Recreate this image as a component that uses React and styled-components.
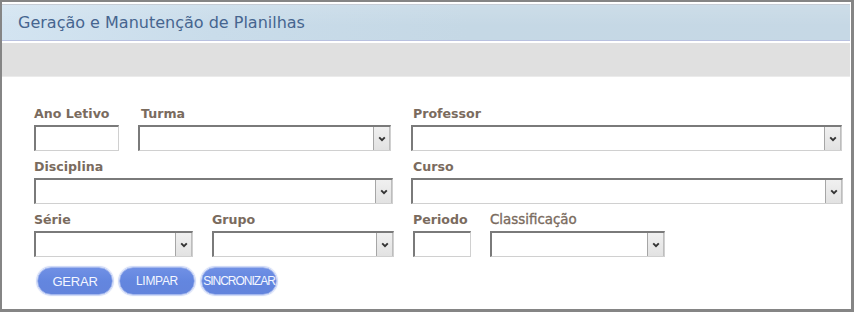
import React from "react";
import styled, { createGlobalStyle } from "styled-components";

const Global = createGlobalStyle`
  html, body { margin: 0; padding: 0; background: #ffffff; }
  body { font-family: "DejaVu Sans", Verdana, sans-serif; }
  * { box-sizing: border-box; }
`;

const Frame = styled.div`
  width: 854px;
  height: 312px;
  border-style: solid;
  border-color: #858585;
  border-width: 2px 3px 3px 2px;
  padding: 2px 1px 0 0;
  background: #ffffff;
  display: flex;
  flex-direction: column;
`;

const Header = styled.div`
  height: 37px;
  border-top: 1px solid #c6ccd4;
  border-bottom: 1px solid #b9c1e0;
  background:
    linear-gradient(180deg, rgba(255,255,255,0.12) 0%, rgba(255,255,255,0) 60%),
    linear-gradient(90deg, #d3e4f1 0%, #c9dcea 25%, #c5d8e5 55%, #c6d8e5 100%);
  display: flex;
  align-items: center;
  padding-left: 16px;
  font-family: "DejaVu Sans", Verdana, sans-serif;
  font-size: 16px;
  color: #46658f;
`;

const Toolbar = styled.div`
  margin-top: 2px;
  height: 34px;
  background: #e0e0e0;
  border-bottom: 1px solid #ebebeb;
`;

const Form = styled.div`
  padding: 29px 0 0 32px;
  display: flex;
  flex-direction: column;
  gap: 8px;
`;

const Row = styled.div`
  display: flex;
  align-items: flex-start;
`;

const Field = styled.div`
  width: ${(p) => p.$w}px;
  margin-left: ${(p) => p.$gap || 0}px;
  display: flex;
  flex-direction: column;
`;

const Label = styled.div`
  height: 16px;
  line-height: 16px;
  margin-bottom: 3px;
  padding-left: ${(p) => p.$shift || 0}px;
  font-family: "DejaVu Sans", Verdana, sans-serif;
  font-size: ${(p) => (p.$light ? "13.4px" : "12.6px")};
  font-weight: ${(p) => (p.$light ? 400 : 700)};
  -webkit-text-stroke: ${(p) => (p.$light ? "0.35px #7a6b5e" : "0")};
  color: #7a6b5e;
  white-space: nowrap;
  overflow: visible;
`;

const TextBox = styled.input`
  width: 100%;
  height: 26px;
  margin: 0;
  padding: 0 3px;
  border-style: solid;
  border-width: 2px 1px 1px 2px;
  border-color: #7a7a7a #d0d0d0 #d0d0d0 #7a7a7a;
  background: #ffffff;
  font-family: "DejaVu Sans", Verdana, sans-serif;
  font-size: 12px;
  outline: none;
`;

const SelectFrame = styled.div`
  width: 100%;
  height: 26px;
  display: flex;
  border-style: solid;
  border-width: 2px 1px 1px 2px;
  border-color: #7a7a7a #d0d0d0 #d0d0d0 #7a7a7a;
  background: #ffffff;
`;

const NativeSelect = styled.select`
  flex: 1;
  min-width: 0;
  appearance: none;
  -webkit-appearance: none;
  border: none;
  background: transparent;
  outline: none;
  font-family: "DejaVu Sans", Verdana, sans-serif;
  font-size: 12px;
  padding: 0 3px;
`;

const ArrowBox = styled.div`
  width: 17px;
  flex: none;
  background: linear-gradient(180deg, #f0f0f0 0%, #e2e2e2 100%);
  border-left: 1px solid #a6a6a6;
  border-right: 1px solid #bdbdbd;
  display: flex;
  align-items: center;
  justify-content: center;
`;

const Buttons = styled.div`
  display: flex;
  gap: 6px;
  margin-top: 2px;
  padding-left: 3px;
`;

const PillButton = styled.button`
  width: 76px;
  height: 28px;
  padding: 0;
  border: 1px solid #a3b7ee;
  border-radius: 14px;
  background: linear-gradient(180deg, #7090e5 0%, #6386df 50%, #6384dc 100%);
  box-shadow: 0 0 1px 1px rgba(140, 165, 235, 0.45);
  color: #f3f6ff;
  font-family: "Liberation Sans", Arial, sans-serif;
  font-size: ${(p) => p.$size}px;
  letter-spacing: ${(p) => p.$ls}px;
  display: flex;
  align-items: center;
  justify-content: center;
  white-space: nowrap;
  cursor: pointer;
`;

const Chevron = () => (
  <svg width="8" height="6" viewBox="0 0 8 6">
    <polyline points="1.2,1.4 4,4.2 6.8,1.4" fill="none" stroke="#333333" strokeWidth="1.9" />
  </svg>
);

const Select = () => (
  <SelectFrame>
    <NativeSelect defaultValue="">
      <option value=""></option>
    </NativeSelect>
    <ArrowBox>
      <Chevron />
    </ArrowBox>
  </SelectFrame>
);

const FormField = ({ label, w, gap, shift, light, input }) => (
  <Field $w={w} $gap={gap}>
    <Label $shift={shift} $light={light}>{label}</Label>
    {input ? <TextBox type="text" /> : <Select />}
  </Field>
);

export default function App() {
  return (
    <>
      <Global />
      <Frame>
        <Header>Geração e Manutenção de Planilhas</Header>
        <Toolbar />
        <Form>
          <Row>
            <FormField label="Ano Letivo" w={85} input />
            <FormField label="Turma" w={253} gap={19} shift={3} />
            <FormField label="Professor" w={431} gap={20} shift={2} />
          </Row>
          <Row>
            <FormField label="Disciplina" w={359} />
            <FormField label="Curso" w={432} gap={18} shift={2} />
          </Row>
          <Row>
            <FormField label="Série" w={159} />
            <FormField label="Grupo" w={182} gap={19} />
            <FormField label="Periodo" w={58} gap={19} input />
            <FormField label="Classificação" w={175} gap={19} shift={-4} light />
          </Row>
          <Buttons>
            <PillButton $size={13} $ls={-0.2}>GERAR</PillButton>
            <PillButton $size={12} $ls={-0.3}>LIMPAR</PillButton>
            <PillButton $size={12} $ls={-1}>SINCRONIZAR</PillButton>
          </Buttons>
        </Form>
      </Frame>
    </>
  );
}
